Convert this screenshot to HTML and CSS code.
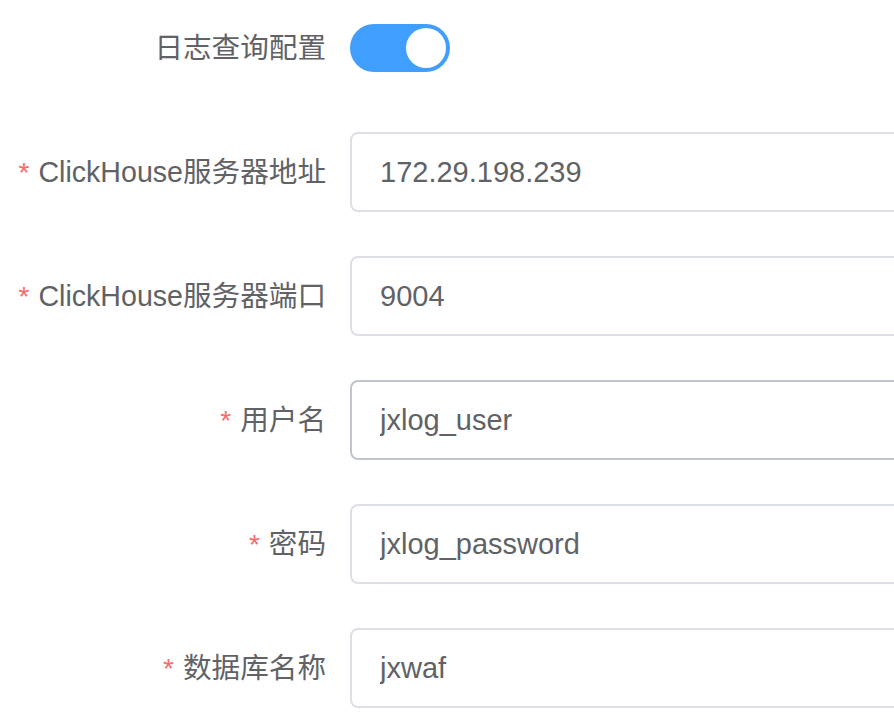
FILE: index.html
```html
<!DOCTYPE html>
<html lang="zh-CN">
<head>
<meta charset="utf-8">
<title>日志查询配置</title>
<link rel="stylesheet" href="styles.css">
</head>
<body>
<form class="form">
  <div class="form-item">
    <label class="form-label">日志查询配置</label>
    <div class="form-content">
      <span class="switch is-checked"><span class="switch-core"><span class="switch-knob"></span></span></span>
    </div>
  </div>
  <div class="form-item">
    <label class="form-label is-required">ClickHouse服务器地址</label>
    <div class="form-content">
      <div class="input"><input class="input-inner" type="text" value="172.29.198.239"></div>
    </div>
  </div>
  <div class="form-item">
    <label class="form-label is-required">ClickHouse服务器端口</label>
    <div class="form-content">
      <div class="input"><input class="input-inner" type="text" value="9004"></div>
    </div>
  </div>
  <div class="form-item">
    <label class="form-label is-required">用户名</label>
    <div class="form-content">
      <div class="input"><input class="input-inner is-hover" type="text" value="jxlog_user"></div>
    </div>
  </div>
  <div class="form-item">
    <label class="form-label is-required">密码</label>
    <div class="form-content">
      <div class="input"><input class="input-inner" type="text" value="jxlog_password"></div>
    </div>
  </div>
  <div class="form-item">
    <label class="form-label is-required">数据库名称</label>
    <div class="form-content">
      <div class="input"><input class="input-inner" type="text" value="jxwaf"></div>
    </div>
  </div>
</form>
</body>
</html>
```
FILE: styles.css
```css
html, body {
  background: #ffffff;
}
body {
  margin: 0;
  padding-top: 8px;
  font-family: "Liberation Sans", Arial, "Noto Sans CJK SC", sans-serif;
  color: #606266;
  overflow: hidden;
}
.form {
  width: 100%;
}
.form-item {
  display: flex;
  align-items: center;
  height: 80px;
  margin-bottom: 44px;
}
.form-label {
  flex: 0 0 350px;
  box-sizing: border-box;
  padding-right: 24px;
  text-align: right;
  font-size: 28.6px;
  line-height: 80px;
  color: #606266;
  white-space: nowrap;
}
.form-label.is-required::before {
  content: "*";
  color: #f56c6c;
  margin-right: 9px;
  font-size: 28px;
}
.form-content {
  flex: 1;
  min-width: 0;
  display: flex;
  align-items: center;
  height: 80px;
  overflow: hidden;
}
.switch {
  display: inline-flex;
  align-items: center;
}
.switch-core {
  position: relative;
  width: 100px;
  height: 48px;
  border-radius: 24px;
  background: #409eff;
  box-sizing: border-box;
}
.switch-knob {
  position: absolute;
  top: 4px;
  right: 4px;
  width: 40px;
  height: 40px;
  border-radius: 50%;
  background: #ffffff;
}
.input {
  flex: 0 0 auto;
  width: calc(100% + 20px);
}
.input-inner {
  display: block;
  width: 100%;
  height: 80px;
  box-sizing: border-box;
  border: 2px solid #dcdfe6;
  border-radius: 8px;
  padding: 0 28px;
  font-family: "Liberation Sans", Arial, "Noto Sans CJK SC", sans-serif;
  font-size: 29px;
  color: #606266;
  background: #ffffff;
  outline: none;
}
.input-inner.is-hover {
  border-color: #c0c4cc;
}
```
